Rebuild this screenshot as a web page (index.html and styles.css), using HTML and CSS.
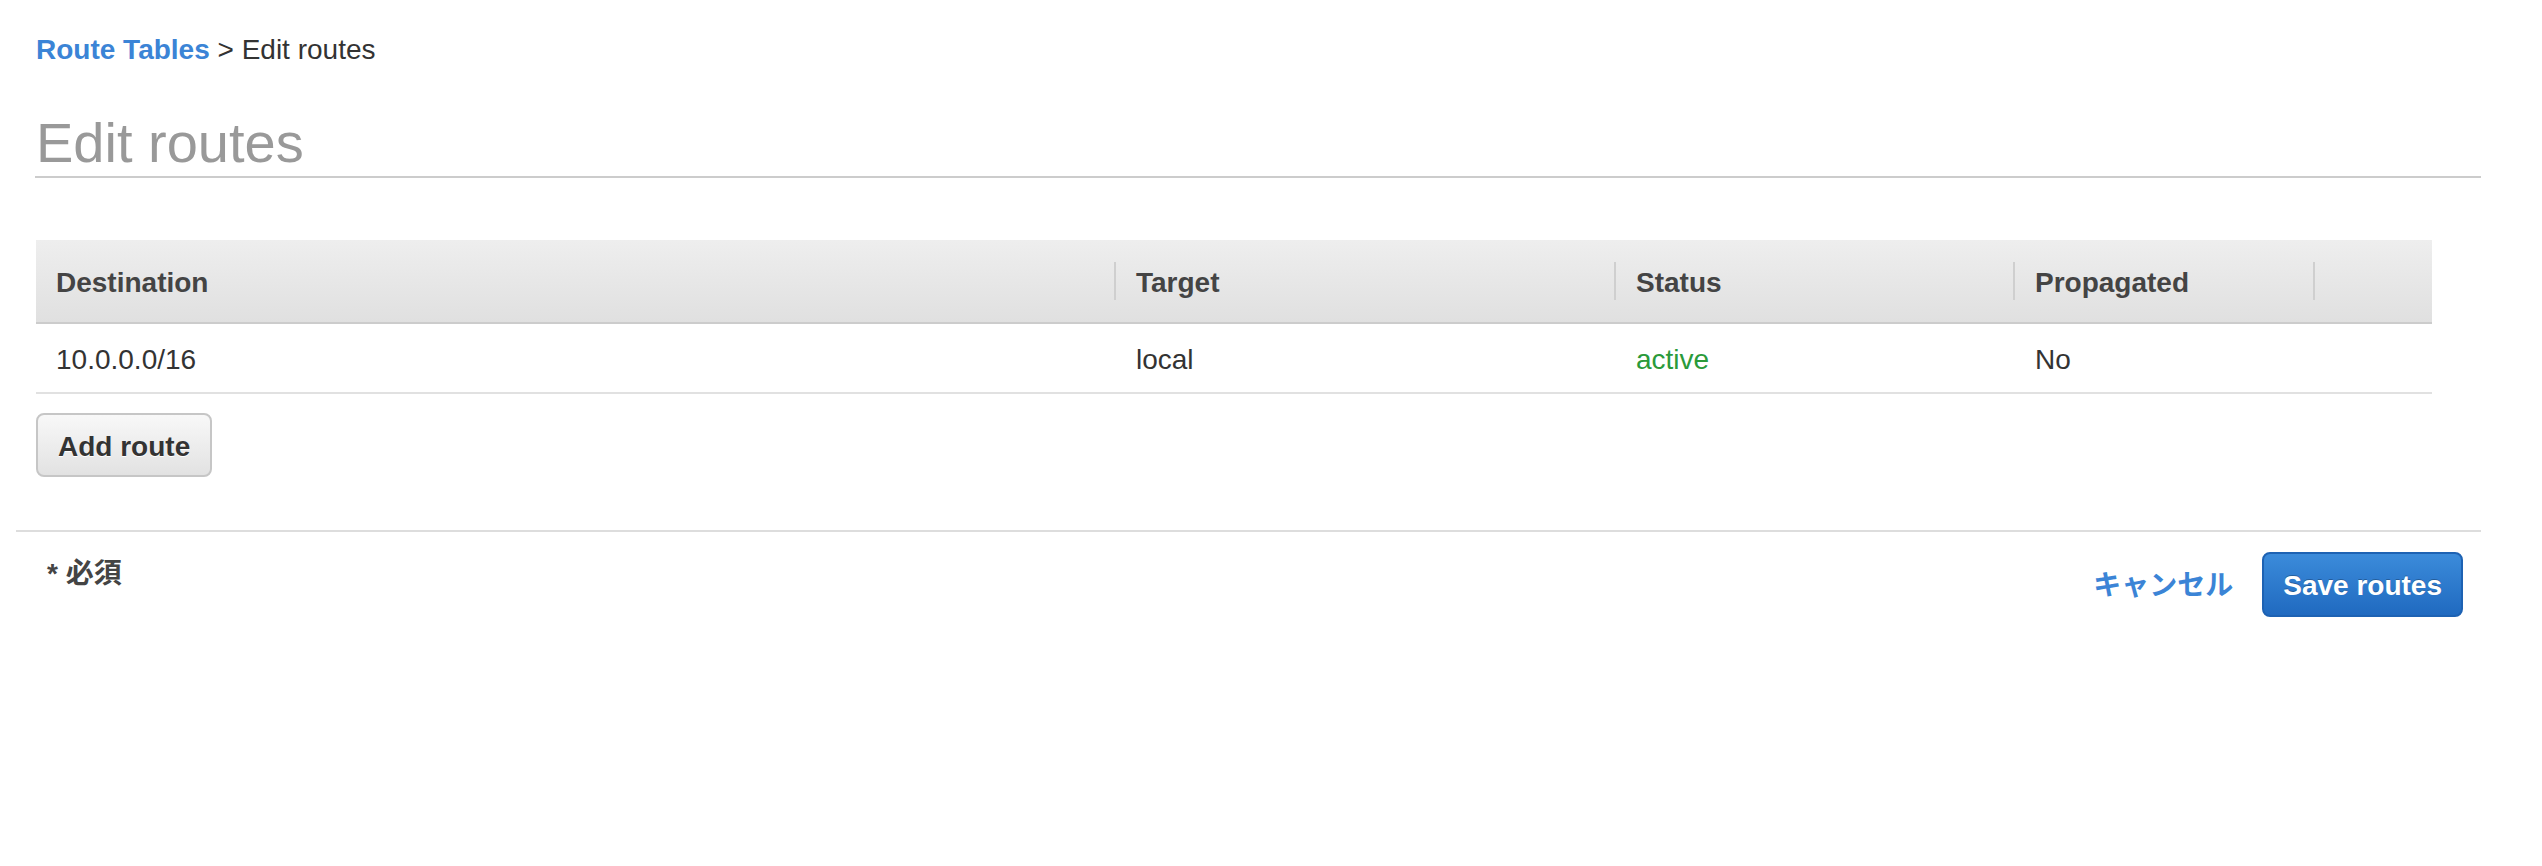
FILE: index.html
```html
<!DOCTYPE html>
<html lang="ja">
<head>
<meta charset="utf-8">
<title>Edit routes</title>
<link rel="stylesheet" href="styles.css">
</head>
<body>
<div class="page">
  <div class="content">
    <div class="breadcrumb"><a class="crumb-link" href="#">Route Tables</a> &gt; Edit routes</div>
    <h1 class="title">Edit routes</h1>

    <div class="table">
      <div class="thead">
        <div class="th first">Destination</div>
        <div class="th">Target</div>
        <div class="th">Status</div>
        <div class="th">Propagated</div>
        <div class="th"></div>
      </div>
      <div class="trow">
        <div class="td first">10.0.0.0/16</div>
        <div class="td">local</div>
        <div class="td status-active">active</div>
        <div class="td">No</div>
        <div class="td"></div>
      </div>
    </div>

    <button class="btn btn-default" type="button">Add route</button>
  </div>

  <div class="footer">
    <div class="required">* 必須</div>
    <div class="actions">
      <a class="cancel" href="#">キャンセル</a>
      <button class="btn btn-primary" type="button">Save routes</button>
    </div>
  </div>
</div>
</body>
</html>
```

FILE: styles.css
```css
html, body {
  margin: 0;
  padding: 0;
  background: #ffffff;
}

body {
  font-family: "Liberation Sans", "Noto Sans CJK JP", Arial, sans-serif;
  font-size: 28px;
  line-height: 32px;
  color: #444444;
}

.page {
  padding: 0 61px 0 16px;
}

.content {
  padding-left: 20px;
}

.breadcrumb {
  margin-top: 34px;
  height: 32px;
  color: #333333;
  white-space: nowrap;
}

.crumb-link {
  color: #3b84d6;
  font-weight: bold;
  text-decoration: none;
}

.title {
  margin: 45px 0 0 -1px;
  padding: 0 0 1px 1px;
  font-size: 56px;
  line-height: 64px;
  font-weight: normal;
  color: #999999;
  border-bottom: 2px solid #cccccc;
}

.table {
  margin-top: 62px;
  margin-right: 49px;
}

.thead,
.trow {
  display: grid;
  grid-template-columns: 1078px 500px 399px 300px 1fr;
}

.thead {
  height: 82px;
  background: linear-gradient(to bottom, #eeeeee 0%, #e0e0e0 100%);
  border-bottom: 2px solid #cccccc;
}

.th {
  display: flex;
  align-items: center;
  padding-top: 3px;
  font-weight: bold;
  color: #444444;
}

.th::before {
  content: "";
  display: block;
  flex: none;
  width: 2px;
  height: 38px;
  margin-top: -3px;
  margin-right: 20px;
  background: #cfcfcf;
}

.th.first {
  padding-left: 20px;
}

.th.first::before {
  display: none;
}

.trow {
  height: 68px;
  border-bottom: 2px solid #e1e1e1;
}

.td {
  display: flex;
  align-items: center;
  padding-left: 22px;
  padding-top: 3px;
  color: #333333;
}

.td.first {
  padding-left: 20px;
}

.status-active {
  color: #2a9a3a;
}

.btn {
  font-family: inherit;
  font-size: 28px;
  line-height: 32px;
  font-weight: bold;
  border-radius: 8px;
  padding: 0 20px;
  cursor: pointer;
  box-sizing: border-box;
  white-space: nowrap;
}

.btn-default {
  display: block;
  margin-top: 19px;
  height: 64px;
  padding-top: 3px;
  color: #333333;
  border: 2px solid #c6c6c6;
  background: linear-gradient(to bottom, #f8f8f8 0%, #e2e2e2 100%);
  text-shadow: 0 1px 0 #ffffff;
}

.footer {
  margin-top: 53px;
  border-top: 2px solid #dddddd;
  display: flex;
  justify-content: space-between;
  align-items: flex-start;
  padding: 0 18px 0 31px;
}

.required {
  margin-top: 26px;
  font-weight: bold;
  color: #444444;
}

.actions {
  margin-top: 20px;
  display: flex;
  align-items: center;
  gap: 29px;
}

.cancel {
  padding-top: 3px;
  color: #3b84d6;
  font-weight: bold;
  text-decoration: none;
}

.btn-primary {
  height: 65px;
  padding: 3px 19px 0;
  color: #ffffff;
  border: 2px solid #1d62b3;
  background: linear-gradient(to bottom, #3b8bda 0%, #206ac0 100%);
  text-shadow: 0 -1px 0 rgba(0, 0, 0, 0.25);
}
```
